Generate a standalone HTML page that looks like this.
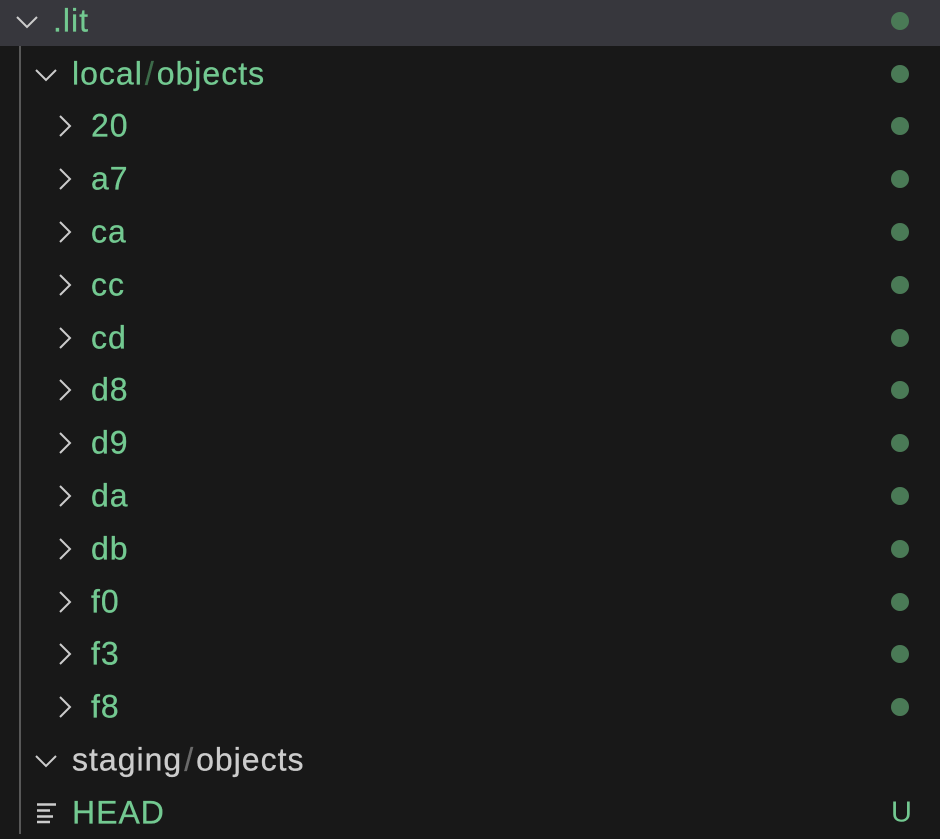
<!DOCTYPE html>
<html><head><style>
body{margin:0;width:940px;height:834px;background:#181818;overflow:hidden;position:relative;font-family:"Liberation Sans",sans-serif;}
.hdr{position:absolute;left:0;top:0;width:940px;height:46px;background:#37373d;}
.guide{position:absolute;left:19px;top:46px;width:2px;height:788px;background:#585858;}
.row{position:absolute;left:0;width:940px;height:53px;}
.t{position:absolute;top:50%;transform:translateY(-50%);font-size:32px;letter-spacing:1px;color:#73c991;white-space:nowrap;-webkit-text-stroke:0.3px currentColor;}
.t .s{color:#3d6b4a;margin:0 2px;}
.w{color:#cccccc}
.w .s{color:#6a6a6a}
.dot{position:absolute;left:891px;top:50%;margin-top:-9px;width:18px;height:18px;border-radius:50%;background:#4a7a56;}
svg{position:absolute;top:50%;}
.u{position:absolute;left:891px;top:50%;transform:translateY(-50%);font-size:29px;color:#73c991;}
</style></head><body>
<div class="hdr"></div>
<div class="guide"></div>

<div class="row" style="top:-6px">
<svg style="left:15px;margin-top:-6px" width="24" height="14"><path d="M2 2 L12 12 L22 2" stroke="#cccccc" stroke-width="2" fill="none"/></svg>
<span class="t" style="left:53px">.lit</span><span class="dot"></span></div>

<div class="row" style="top:47px">
<svg style="left:34px;margin-top:-6px" width="24" height="14"><path d="M2 2 L12 12 L22 2" stroke="#cccccc" stroke-width="2" fill="none"/></svg>
<span class="t" style="left:72px">local<span class="s">/</span>objects</span><span class="dot"></span></div>

<div class="row" style="top:99px"><svg style="left:58px;margin-top:-12px" width="14" height="24"><path d="M2 2 L12 12 L2 22" stroke="#cccccc" stroke-width="2" fill="none"/></svg><span class="t" style="left:91px">20</span><span class="dot"></span></div>
<div class="row" style="top:152px"><svg style="left:58px;margin-top:-12px" width="14" height="24"><path d="M2 2 L12 12 L2 22" stroke="#cccccc" stroke-width="2" fill="none"/></svg><span class="t" style="left:91px">a7</span><span class="dot"></span></div>
<div class="row" style="top:205px"><svg style="left:58px;margin-top:-12px" width="14" height="24"><path d="M2 2 L12 12 L2 22" stroke="#cccccc" stroke-width="2" fill="none"/></svg><span class="t" style="left:91px">ca</span><span class="dot"></span></div>
<div class="row" style="top:258px"><svg style="left:58px;margin-top:-12px" width="14" height="24"><path d="M2 2 L12 12 L2 22" stroke="#cccccc" stroke-width="2" fill="none"/></svg><span class="t" style="left:91px">cc</span><span class="dot"></span></div>
<div class="row" style="top:311px"><svg style="left:58px;margin-top:-12px" width="14" height="24"><path d="M2 2 L12 12 L2 22" stroke="#cccccc" stroke-width="2" fill="none"/></svg><span class="t" style="left:91px">cd</span><span class="dot"></span></div>
<div class="row" style="top:363px"><svg style="left:58px;margin-top:-12px" width="14" height="24"><path d="M2 2 L12 12 L2 22" stroke="#cccccc" stroke-width="2" fill="none"/></svg><span class="t" style="left:91px">d8</span><span class="dot"></span></div>
<div class="row" style="top:416px"><svg style="left:58px;margin-top:-12px" width="14" height="24"><path d="M2 2 L12 12 L2 22" stroke="#cccccc" stroke-width="2" fill="none"/></svg><span class="t" style="left:91px">d9</span><span class="dot"></span></div>
<div class="row" style="top:469px"><svg style="left:58px;margin-top:-12px" width="14" height="24"><path d="M2 2 L12 12 L2 22" stroke="#cccccc" stroke-width="2" fill="none"/></svg><span class="t" style="left:91px">da</span><span class="dot"></span></div>
<div class="row" style="top:522px"><svg style="left:58px;margin-top:-12px" width="14" height="24"><path d="M2 2 L12 12 L2 22" stroke="#cccccc" stroke-width="2" fill="none"/></svg><span class="t" style="left:91px">db</span><span class="dot"></span></div>
<div class="row" style="top:575px"><svg style="left:58px;margin-top:-12px" width="14" height="24"><path d="M2 2 L12 12 L2 22" stroke="#cccccc" stroke-width="2" fill="none"/></svg><span class="t" style="left:91px">f0</span><span class="dot"></span></div>
<div class="row" style="top:627px"><svg style="left:58px;margin-top:-12px" width="14" height="24"><path d="M2 2 L12 12 L2 22" stroke="#cccccc" stroke-width="2" fill="none"/></svg><span class="t" style="left:91px">f3</span><span class="dot"></span></div>
<div class="row" style="top:680px"><svg style="left:58px;margin-top:-12px" width="14" height="24"><path d="M2 2 L12 12 L2 22" stroke="#cccccc" stroke-width="2" fill="none"/></svg><span class="t" style="left:91px">f8</span><span class="dot"></span></div>

<div class="row" style="top:733px">
<svg style="left:34px;margin-top:-6px" width="24" height="14"><path d="M2 2 L12 12 L22 2" stroke="#cccccc" stroke-width="2" fill="none"/></svg>
<span class="t w" style="left:72px">staging<span class="s">/</span>objects</span></div>

<div class="row" style="top:786px">
<svg style="left:36px;margin-top:-11px" width="22" height="22"><path d="M1 2.5H20M1 8.5H14M1 14.5H17M1 20H14" stroke="#cccccc" stroke-width="2.6" fill="none"/></svg>
<span class="t" style="left:72px">HEAD</span><span class="u">U</span></div>
</body></html>
